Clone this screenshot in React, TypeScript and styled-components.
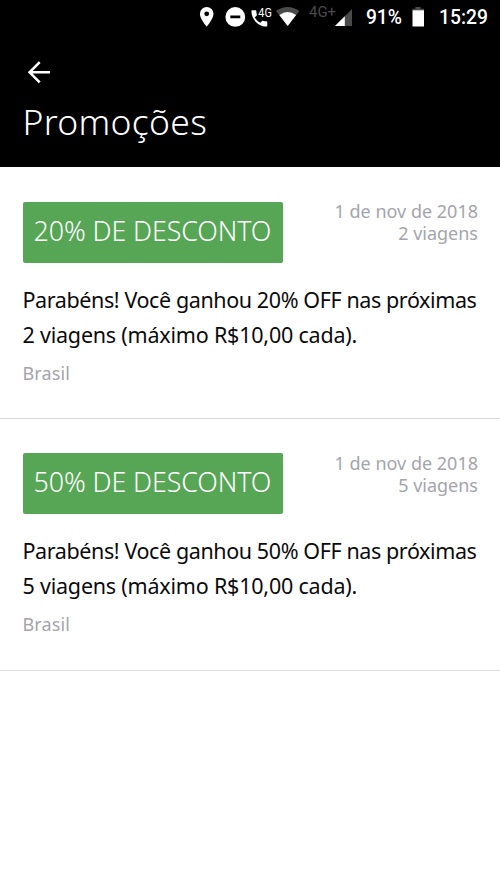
import styled, { createGlobalStyle } from 'styled-components'

const GlobalStyle = createGlobalStyle`
  * {
    box-sizing: border-box;
  }

  body {
    background: #fff;
    font-family: "Noto Sans", "Open Sans", sans-serif;
    margin: 0;
  }
`

const Screen = styled.div`
  min-height: 889px;
  width: 500px;
`

const Header = styled.header`
  background: #000;
  color: #fff;
  height: 167px;
`

const StatusBar = styled.div`
  align-items: flex-start;
  display: flex;
  font-family: Roboto, sans-serif;
  height: 36px;
  justify-content: flex-end;
  padding-right: 12px;
`

const StatusIcons = styled.svg`
  display: block;
  height: 36px;
  width: 162px;
`

const StatusText = styled.span<{ $width: number }>`
  font-size: 19.3px;
  font-weight: 500;
  line-height: 35px;
  text-align: right;
  white-space: nowrap;
  width: ${({ $width }) => $width}px;
`

const Battery = styled.svg`
  display: block;
  height: 36px;
  margin: 0 14px 0 10px;
  width: 13px;
`

const BackButton = styled.button`
  background: none;
  border: 0;
  color: #fff;
  display: block;
  height: 24px;
  margin: 24px 0 0 27px;
  padding: 0;
  width: 24px;
`

const Title = styled.h1`
  font-size: 35.5px;
  font-weight: 300;
  letter-spacing: 0.3px;
  line-height: 48px;
  margin: 13px 0 0 22.5px;
`

const Card = styled.article`
  border-bottom: 1px solid #dcdcde;
  height: 252px;
  padding: 34.5px 22px 0 22.5px;

  & + & {
    padding-top: 34px;
  }
`

const CardTop = styled.div`
  display: flex;
  justify-content: space-between;
`

const Badge = styled.div`
  background: #57a656;
  border-radius: 2px;
  color: #fff;
  font-size: 26.8px;
  font-weight: 300;
  height: 61px;
  letter-spacing: -0.1px;
  line-height: 58px;
  padding-left: 11px;
  white-space: nowrap;
  width: 260.5px;
`

const Meta = styled.div`
  color: #a4a5aa;
  font-size: 18px;
  line-height: 22px;
  margin-top: -1.5px;
  text-align: right;
`

const Description = styled.p`
  color: #0b0b0d;
  font-size: 21.5px;
  line-height: 35px;
  margin: 19px 0 0;
  white-space: nowrap;
`

const Line = styled.span<{ $spacing: number }>`
  display: block;
  letter-spacing: ${({ $spacing }) => $spacing}px;
`

const Place = styled.div`
  color: #a4a5aa;
  font-size: 18px;
  letter-spacing: 0.1px;
  line-height: 24px;
  margin-top: 9px;
`

interface Promotion {
  percent: number
  trips: number
}

const promotions: Promotion[] = [
  { percent: 20, trips: 2 },
  { percent: 50, trips: 5 },
]

const PromotionCard: React.FC<Promotion> = ({ percent, trips }) => (
  <Card>
    <CardTop>
      <Badge>{`${percent}% DE DESCONTO`}</Badge>
      <Meta>
        <div>1 de nov de 2018</div>
        <div>{`${trips} viagens`}</div>
      </Meta>
    </CardTop>
    <Description>
      <Line $spacing={-0.4}>{`Parabéns! Você ganhou ${percent}% OFF nas próximas`}</Line>
      <Line $spacing={-0.21}>{`${trips} viagens (máximo R$10,00 cada).`}</Line>
    </Description>
    <Place>Brasil</Place>
  </Card>
)

const App = () => (
  <Screen>
    <GlobalStyle />
    <Header>
      <StatusBar>
        <StatusIcons viewBox="0 0 162 36" fill="#fff">
          {/* location */}
          <path fillRule="evenodd" d="M16.7 7a6.8 6.8 0 0 0-6.8 6.8c0 5 6.8 12.9 6.8 12.9s6.8-7.9 6.8-12.9A6.8 6.8 0 0 0 16.7 7zm0 4.4a2.4 2.4 0 1 1 0 4.8 2.4 2.4 0 0 1 0-4.8z" />
          {/* do not disturb */}
          <path fillRule="evenodd" d="M45.3 7a9.9 9.9 0 1 0 0 19.8 9.9 9.9 0 0 0 0-19.8zm-5 8.5h10v2.8h-10z" />
          {/* call over 4G */}
          <path d="M62.2 10.3h3.3q.8 0 .8.8c0 1.3.2 2.4.6 3.6q.1.5-.2.9l-2 2a13 13 0 0 0 5.6 5.2l1.7-1.9q.4-.4.9-.2c1.1.4 2.3.6 3.6.6q.8 0 .8.8v3.7q0 .8-.8.8C68.5 26.6 61.4 19.6 61.4 11.1q0-.8.8-.8z" />
          <text x="68.3" y="17.2" fontSize="12" textLength="13.5" lengthAdjust="spacingAndGlyphs">4G</text>
          {/* wifi */}
          <path fill="#4a4a4a" d="M97.7 26 86 10.9q11.7-7.6 23.4 0z" />
          <path d="M97.7 26 89.3 15.1q8.4-6 16.8 0z" />
          {/* mobile signal */}
          <text x="119" y="17.3" fontSize="14.5" fill="#4a4a4a" textLength="27" lengthAdjust="spacingAndGlyphs">4G+</text>
          <path fill="#4a4a4a" d="M162 9v17h-17z" />
          <path d="M154.8 16.2V26H145z" />
        </StatusIcons>
        <StatusText $width={50}>91%</StatusText>
        <Battery viewBox="0 0 13 36">
          <path fill="#4a4a4a" d="M3.5 7h5v1.8H12V11H.5V8.8h3z" />
          <path fill="#fff" d="M.5 10.3H12V26.5H.5z" />
        </Battery>
        <StatusText $width={49}>15:29</StatusText>
      </StatusBar>
      <BackButton aria-label="Voltar">
        <svg width="24" height="24" viewBox="0 0 24 24" fill="none" stroke="currentColor" strokeWidth="2.6">
          <path d="M23 12.3H3M12.7 2.2 2.6 12.3l10.1 10.1" />
        </svg>
      </BackButton>
      <Title>Promoções</Title>
    </Header>
    <main>
      {promotions.map(promotion => (
        <PromotionCard key={promotion.percent} {...promotion} />
      ))}
    </main>
  </Screen>
)

export default App
